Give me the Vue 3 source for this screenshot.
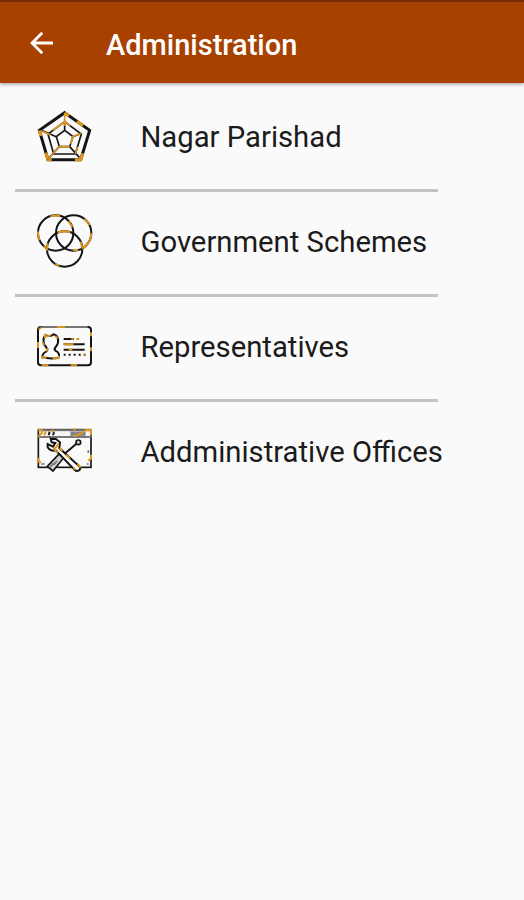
<template>
  <div class="screen">
    <header class="toolbar">
      <button class="back-btn" aria-label="Back">
        <svg viewBox="0 0 24 24" width="24" height="24">
          <path d="M23 12H2M12.3 1.8L2 12L12.3 22.2" />
        </svg>
      </button>
      <h1 class="title">Administration</h1>
    </header>

    <ul class="menu">
      <li v-for="item in items" :key="item.icon" class="menu-item">
        <!-- pentagon web -->
        <svg v-if="item.icon === 'web'" class="icon" viewBox="1 0 210 192">
          <path class="thick" d="M105 26L180 79L153 167H55L29 79Z" />
          <path class="thick gold" d="M105 26L118 35M142 52L160 65M29 79L34 96M48 146L55 167L66 167M136 167H153L159 148" />
          <path class="mid" d="M105 53L155 90L137 150H72L55 90Z" />
          <path class="mid" d="M105 79L130 98L120 128H89L80 98Z" />
          <path class="mid" d="M105 53V79M130 98L155 88M120 128L149 160M89 128L54 166M80 98L33 78" />
          <path class="mid gold" d="M105 28V65M105 53L70 78M105 53L122 65M33 80L62 92M126 99L155 88M120 128H89L54 166M130 98L123 120M144 128L137 150" />
        </svg>

        <!-- overlapping circles -->
        <svg v-else-if="item.icon === 'circles'" class="icon" viewBox="1 3 210 192">
          <g class="frame">
            <circle cx="78" cy="75" r="53" />
            <circle cx="132" cy="75" r="53" />
            <circle cx="105" cy="123" r="53" />
          </g>
          <g class="frame gold">
            <path d="M62 25A53 53 0 0 1 91 24M25 70A53 53 0 0 0 30 97M42 114L52 121" />
            <path d="M164 33A53 53 0 0 1 179 51M185 75A53 53 0 0 1 156 122M145 126H130" />
            <path d="M84 74A53 53 0 0 1 122 73M54 106L51 128M77 168L89 173M117 40L128 58M153 101L157 118" />
          </g>
        </svg>

        <!-- id card -->
        <svg v-else-if="item.icon === 'card'" class="icon" viewBox="1 -6 210 192">
          <rect class="frame" x="25" y="33" width="159" height="115" rx="9" />
          <path class="frame grey" d="M35 33H174" />
          <path class="frame gold" d="M82 33H106M25 78V96M36 148H56M123 148H142M184 94V106M184 49V61M27 41L34 34" />
          <path class="portrait" d="M46 58C40 67 39 82 49 93Q56 101 51 106C43 109 38 115 38 124Q64 130 87 125C91 114 86 108 77 104Q72 98 79 92C90 78 87 58 71 55C63 64 55 58 46 58Z" />
          <path class="portrait gold" d="M46 53V67M46 60Q57 62 63 57M39 78L43 88M77 60L84 67M55 96L50 106M38 119V124L50 127M69 127H85L89 120" />
          <path class="lines" d="M102 69H132M102 85H165M102 101H165" />
          <path class="lines dotted" d="M102 116H168" />
          <path class="lines gold" d="M125 69H130M140 69H149M102 85H132M117 101H128M161 116H168" />
        </svg>

        <!-- browser window with tools -->
        <svg v-else class="icon" viewBox="1 -3 210 192">
          <rect class="mid" x="26" y="29" width="158" height="113" />
          <path class="bar" d="M25 31H185M25 51H185" />
          <path class="frame" d="M60 35L57 46M73 36L70 46" />
          <path class="blank" d="M82 41H121" />
          <path class="search" d="M122 41H168" />
          <path class="frame gold" d="M25 29H37V38L27 49M48 34L44 46M66 30L72 36M132 49L154 41L169 30H184V46M26 113V126H34M184 104V116L176 122M130 28H139" />
          <path class="mid grey" d="M34 132H45M171 132H177M176 91V99" />
          <path class="driver" d="M53 139L89 101L102 113L70 153Z" />
          <path class="mid grey" d="M72 129L62 141M82 122L72 135" />
          <path class="frame" d="M104 102L142 70" />
          <circle class="driver" cx="146" cy="67" r="7" />
          <path class="wrench" d="M63 56L79 57L91 67L89 84L151 141Q154 151 143 153Q138 154 134 149L79 92Q62 95 54 82L54 72L70 80L77 69L66 67Z" />
          <path class="frame gold" d="M87 70L80 81L73 85L78 94L86 96M90 84L99 92M109 104L121 115M144 132L153 143M131 143L136 149" />
        </svg>

        <span class="label">{{ item.label }}</span>
      </li>
    </ul>
  </div>
</template>

<script setup>
// Entries of the administration menu
const items = [
  { icon: 'web', label: 'Nagar Parishad' },
  { icon: 'circles', label: 'Government Schemes' },
  { icon: 'card', label: 'Representatives' },
  { icon: 'tools', label: 'Addministrative Offices' },
];
</script>

<style>
body {
  margin: 0;
  background-color: #fafafa;
}
</style>

<style scoped>
.screen {
  min-height: 900px;
  background-color: #fafafa;
  font-family: Roboto, 'Liberation Sans', sans-serif;
}

/* Top bar */
.toolbar {
  box-sizing: border-box;
  display: flex;
  align-items: center;
  height: 83px;
  padding: 4px 0 0 30px;
  border-top: 2px solid #752b05;
  background-color: #a84000;
  box-shadow: 0 1px 4px rgba(0, 0, 0, 0.4);
}

.back-btn {
  display: flex;
  width: 76px;
  padding: 0 0 4px;
  border: none;
  background: none;
  cursor: pointer;
}

.back-btn path {
  fill: none;
  stroke: #fff;
  stroke-width: 2.8;
}

.title {
  margin: 0;
  color: #fff;
  font-size: 29px;
  font-weight: 500;
  line-height: 34px;
}

/* Menu list */
.menu {
  margin: 0;
  padding: 4px 0 0 15px;
  list-style: none;
}

.menu-item {
  box-sizing: border-box;
  display: flex;
  align-items: flex-start;
  gap: 40.5px;
  width: 423px;
  height: 105px;
  padding: 17px 0 0 15px;
  border-bottom: 3px solid #c3c3c3;
}

.menu-item:last-child {
  border-bottom: none;
}

.label {
  padding-top: 15px;
  color: #1b1b1b;
  font-size: 29.25px;
  line-height: 36px;
  white-space: nowrap;
}

/* Icons */
.icon {
  flex: none;
  width: 70px;
  height: 64px;
  fill: none;
  stroke: #151515;
}

.mid {
  stroke-width: 5;
}

.frame {
  stroke-width: 6;
}

.thick {
  stroke-width: 9;
}

.portrait,
.lines {
  stroke-width: 6;
}

.dotted {
  stroke-dasharray: 6 9;
}

.grey {
  stroke: #777;
}

.bar {
  stroke: #777;
  stroke-width: 6;
}

.blank {
  stroke: #f5f5f5;
  stroke-width: 12;
}

.search {
  stroke: #858585;
  stroke-width: 13;
}

.driver {
  fill: #d0d0d0;
  stroke-width: 5;
}

.wrench {
  fill: #fff;
  stroke-width: 6;
}

.gold {
  stroke: #dc951f;
}
</style>
